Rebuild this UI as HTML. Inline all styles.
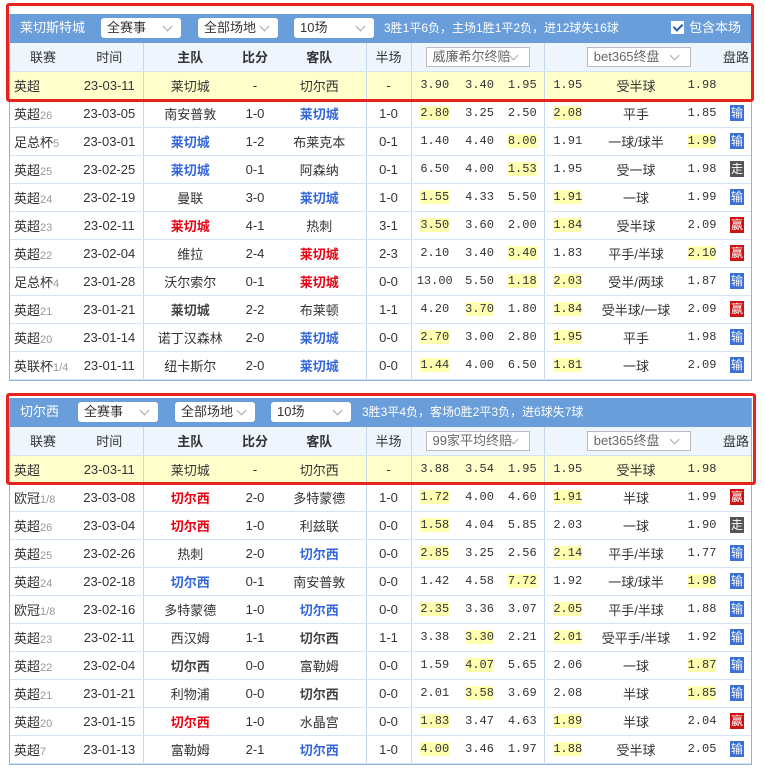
<!DOCTYPE html>
<html><head><meta charset="utf-8">
<style>
*{margin:0;padding:0;box-sizing:border-box}
body{width:765px;height:777px;background:#fff;font-family:"Liberation Sans","Noto Sans CJK SC",sans-serif;font-size:13px;color:#333;position:relative;overflow:hidden}
.wrap{position:absolute;left:9px;width:743px;border:1px solid #8fb3dd;border-top:none}
.bar{height:29px;background:#6a9edb;color:#fff;position:relative;font-size:13px}
.bar .t{position:absolute;top:0;line-height:28px}
.sel{position:absolute;top:4px;height:20px;line-height:20px;background:#fff;border-radius:3px;color:#333;font-size:13px;padding:0 0 0 6px}
.sel:after{content:"";position:absolute;right:10px;top:5px;width:6px;height:6px;border-right:1px solid #aaa;border-bottom:1px solid #aaa;transform:rotate(45deg)}
table{border-collapse:collapse;table-layout:fixed;width:741px}
td{height:28px;text-align:center;border-bottom:1px solid #d6e3f2;white-space:nowrap;overflow:hidden;padding:0}
tr.h td{background:#eef5fd;font-size:13px}
tr.y td{background:#ffffcc}
.bl{border-left:1px solid #c5d7ec}
.lg{text-align:left;padding-left:4px}
.lg i{font-style:normal;color:#999;font-size:11px}
.n{font-family:"Liberation Mono",monospace;font-size:12px}
.n span,.hl{background:#ffffb0}
.b{color:#3366dd;font-weight:bold}
.r{color:#e60012;font-weight:bold}
.d{color:#444;font-weight:bold}
.ic{display:inline-block;width:14px;height:16px;color:#fff;font-size:12px;line-height:16px;text-align:center;vertical-align:middle}
.L{background:#3a6fd8}.W{background:#cc1111}.D{background:#555}
.hs{display:inline-block;position:relative;height:20px;line-height:18px;border:1px solid #bbb;background:#fff;color:#666;text-align:left;padding:0 0 0 6px;vertical-align:middle}
.hs:after{content:"";position:absolute;right:12px;top:4px;width:6px;height:6px;border-right:1px solid #aaa;border-bottom:1px solid #aaa;transform:rotate(45deg)}
.red{position:absolute;border:3px solid #e8231e;border-radius:3px}
.cb{position:absolute;right:10px;top:0;line-height:28px}
.cb b{display:inline-block;width:13px;height:13px;background:#fff;vertical-align:-2px;margin-right:5px;position:relative}
.cb b:after{content:"";position:absolute;left:4px;top:1px;width:4px;height:7px;border-right:2px solid #2a5db0;border-bottom:2px solid #2a5db0;transform:rotate(45deg)}
</style></head><body>

<div class="wrap" style="top:14px">
<div class="bar">
<span class="t" style="left:10px">莱切斯特城</span>
<div class="sel" style="left:91px;width:80px">全赛事</div>
<div class="sel" style="left:188px;width:80px">全部场地</div>
<div class="sel" style="left:284px;width:80px">10场</div>
<span class="t" style="left:374px;font-size:12px">3胜1平6负，主场1胜1平2负，进12球失16球</span>
<span class="cb"><b></b>包含本场</span>
</div>
<table>
<colgroup><col style="width:66px"><col style="width:67px"><col style="width:94px"><col style="width:36px"><col style="width:93px"><col style="width:45px"><col style="width:47px"><col style="width:43px"><col style="width:43px"><col style="width:47px"><col style="width:90px"><col style="width:42px"><col style="width:28px"></colgroup>
<tr class="h"><td>联赛</td><td>时间</td><td class="bl"><b>主队</b></td><td><b>比分</b></td><td><b>客队</b></td><td class="bl">半场</td><td class="bl" colspan="3"><span class="hs" style="width:104px">威廉希尔终赔</span></td><td class="bl" colspan="3"><span class="hs" style="width:104px;margin-left:10px">bet365终盘</span></td><td style="text-align:right;padding-right:2px">盘路</td></tr>
<tr class="y"><td class="lg">英超</td><td>23-03-11</td><td class="bl">莱切城</td><td>-</td><td>切尔西</td><td class="bl">-</td><td class="bl n">3.90</td><td class="n">3.40</td><td class="n">1.95</td><td class="bl n">1.95</td><td>受半球</td><td class="n">1.98</td><td></td></tr>
<tr><td class="lg">英超<i>26</i></td><td>23-03-05</td><td class="bl">南安普敦</td><td>1-0</td><td class="b">莱切城</td><td class="bl">1-0</td><td class="bl n"><span>2.80</span></td><td class="n">3.25</td><td class="n">2.50</td><td class="bl n"><span>2.08</span></td><td>平手</td><td class="n">1.85</td><td><span class="ic L">输</span></td></tr>
<tr><td class="lg">足总杯<i>5</i></td><td>23-03-01</td><td class="bl b">莱切城</td><td>1-2</td><td>布莱克本</td><td class="bl">0-1</td><td class="bl n">1.40</td><td class="n">4.40</td><td class="n"><span>8.00</span></td><td class="bl n">1.91</td><td>一球/球半</td><td class="n"><span>1.99</span></td><td><span class="ic L">输</span></td></tr>
<tr><td class="lg">英超<i>25</i></td><td>23-02-25</td><td class="bl b">莱切城</td><td>0-1</td><td>阿森纳</td><td class="bl">0-1</td><td class="bl n">6.50</td><td class="n">4.00</td><td class="n"><span>1.53</span></td><td class="bl n">1.95</td><td>受一球</td><td class="n">1.98</td><td><span class="ic D">走</span></td></tr>
<tr><td class="lg">英超<i>24</i></td><td>23-02-19</td><td class="bl">曼联</td><td>3-0</td><td class="b">莱切城</td><td class="bl">1-0</td><td class="bl n"><span>1.55</span></td><td class="n">4.33</td><td class="n">5.50</td><td class="bl n"><span>1.91</span></td><td>一球</td><td class="n">1.99</td><td><span class="ic L">输</span></td></tr>
<tr><td class="lg">英超<i>23</i></td><td>23-02-11</td><td class="bl r">莱切城</td><td>4-1</td><td>热刺</td><td class="bl">3-1</td><td class="bl n"><span>3.50</span></td><td class="n">3.60</td><td class="n">2.00</td><td class="bl n"><span>1.84</span></td><td>受半球</td><td class="n">2.09</td><td><span class="ic W">赢</span></td></tr>
<tr><td class="lg">英超<i>22</i></td><td>23-02-04</td><td class="bl">维拉</td><td>2-4</td><td class="r">莱切城</td><td class="bl">2-3</td><td class="bl n">2.10</td><td class="n">3.40</td><td class="n"><span>3.40</span></td><td class="bl n">1.83</td><td>平手/半球</td><td class="n"><span>2.10</span></td><td><span class="ic W">赢</span></td></tr>
<tr><td class="lg">足总杯<i>4</i></td><td>23-01-28</td><td class="bl">沃尔索尔</td><td>0-1</td><td class="r">莱切城</td><td class="bl">0-0</td><td class="bl n">13.00</td><td class="n">5.50</td><td class="n"><span>1.18</span></td><td class="bl n"><span>2.03</span></td><td>受半/两球</td><td class="n">1.87</td><td><span class="ic L">输</span></td></tr>
<tr><td class="lg">英超<i>21</i></td><td>23-01-21</td><td class="bl d">莱切城</td><td>2-2</td><td>布莱顿</td><td class="bl">1-1</td><td class="bl n">4.20</td><td class="n"><span>3.70</span></td><td class="n">1.80</td><td class="bl n"><span>1.84</span></td><td>受半球/一球</td><td class="n">2.09</td><td><span class="ic W">赢</span></td></tr>
<tr><td class="lg">英超<i>20</i></td><td>23-01-14</td><td class="bl">诺丁汉森林</td><td>2-0</td><td class="b">莱切城</td><td class="bl">0-0</td><td class="bl n"><span>2.70</span></td><td class="n">3.00</td><td class="n">2.80</td><td class="bl n"><span>1.95</span></td><td>平手</td><td class="n">1.98</td><td><span class="ic L">输</span></td></tr>
<tr><td class="lg">英联杯<i>1/4</i></td><td>23-01-11</td><td class="bl">纽卡斯尔</td><td>2-0</td><td class="b">莱切城</td><td class="bl">0-0</td><td class="bl n"><span>1.44</span></td><td class="n">4.00</td><td class="n">6.50</td><td class="bl n"><span>1.81</span></td><td>一球</td><td class="n">2.09</td><td><span class="ic L">输</span></td></tr>
</table>
</div>
<div class="red" style="left:6px;top:3px;width:748px;height:99px"></div>

<div class="wrap" style="top:398px">
<div class="bar">
<span class="t" style="left:10px">切尔西</span>
<div class="sel" style="left:68px;width:80px">全赛事</div>
<div class="sel" style="left:165px;width:80px">全部场地</div>
<div class="sel" style="left:261px;width:80px">10场</div>
<span class="t" style="left:352px;font-size:12px">3胜3平4负，客场0胜2平3负，进6球失7球</span>
</div>
<table>
<colgroup><col style="width:66px"><col style="width:67px"><col style="width:94px"><col style="width:36px"><col style="width:93px"><col style="width:45px"><col style="width:47px"><col style="width:43px"><col style="width:43px"><col style="width:47px"><col style="width:90px"><col style="width:42px"><col style="width:28px"></colgroup>
<tr class="h"><td>联赛</td><td>时间</td><td class="bl"><b>主队</b></td><td><b>比分</b></td><td><b>客队</b></td><td class="bl">半场</td><td class="bl" colspan="3"><span class="hs" style="width:104px">99家平均终赔</span></td><td class="bl" colspan="3"><span class="hs" style="width:104px;margin-left:10px">bet365终盘</span></td><td style="text-align:right;padding-right:2px">盘路</td></tr>
<tr class="y"><td class="lg">英超</td><td>23-03-11</td><td class="bl">莱切城</td><td>-</td><td>切尔西</td><td class="bl">-</td><td class="bl n">3.88</td><td class="n">3.54</td><td class="n">1.95</td><td class="bl n">1.95</td><td>受半球</td><td class="n">1.98</td><td></td></tr>
<tr><td class="lg">欧冠<i>1/8</i></td><td>23-03-08</td><td class="bl r">切尔西</td><td>2-0</td><td>多特蒙德</td><td class="bl">1-0</td><td class="bl n"><span>1.72</span></td><td class="n">4.00</td><td class="n">4.60</td><td class="bl n"><span>1.91</span></td><td>半球</td><td class="n">1.99</td><td><span class="ic W">赢</span></td></tr>
<tr><td class="lg">英超<i>26</i></td><td>23-03-04</td><td class="bl r">切尔西</td><td>1-0</td><td>利兹联</td><td class="bl">0-0</td><td class="bl n"><span>1.58</span></td><td class="n">4.04</td><td class="n">5.85</td><td class="bl n">2.03</td><td>一球</td><td class="n">1.90</td><td><span class="ic D">走</span></td></tr>
<tr><td class="lg">英超<i>25</i></td><td>23-02-26</td><td class="bl">热刺</td><td>2-0</td><td class="b">切尔西</td><td class="bl">0-0</td><td class="bl n"><span>2.85</span></td><td class="n">3.25</td><td class="n">2.56</td><td class="bl n"><span>2.14</span></td><td>平手/半球</td><td class="n">1.77</td><td><span class="ic L">输</span></td></tr>
<tr><td class="lg">英超<i>24</i></td><td>23-02-18</td><td class="bl b">切尔西</td><td>0-1</td><td>南安普敦</td><td class="bl">0-0</td><td class="bl n">1.42</td><td class="n">4.58</td><td class="n"><span>7.72</span></td><td class="bl n">1.92</td><td>一球/球半</td><td class="n"><span>1.98</span></td><td><span class="ic L">输</span></td></tr>
<tr><td class="lg">欧冠<i>1/8</i></td><td>23-02-16</td><td class="bl">多特蒙德</td><td>1-0</td><td class="b">切尔西</td><td class="bl">0-0</td><td class="bl n"><span>2.35</span></td><td class="n">3.36</td><td class="n">3.07</td><td class="bl n"><span>2.05</span></td><td>平手/半球</td><td class="n">1.88</td><td><span class="ic L">输</span></td></tr>
<tr><td class="lg">英超<i>23</i></td><td>23-02-11</td><td class="bl">西汉姆</td><td>1-1</td><td class="d">切尔西</td><td class="bl">1-1</td><td class="bl n">3.38</td><td class="n"><span>3.30</span></td><td class="n">2.21</td><td class="bl n"><span>2.01</span></td><td>受平手/半球</td><td class="n">1.92</td><td><span class="ic L">输</span></td></tr>
<tr><td class="lg">英超<i>22</i></td><td>23-02-04</td><td class="bl d">切尔西</td><td>0-0</td><td>富勒姆</td><td class="bl">0-0</td><td class="bl n">1.59</td><td class="n"><span>4.07</span></td><td class="n">5.65</td><td class="bl n">2.06</td><td>一球</td><td class="n"><span>1.87</span></td><td><span class="ic L">输</span></td></tr>
<tr><td class="lg">英超<i>21</i></td><td>23-01-21</td><td class="bl">利物浦</td><td>0-0</td><td class="d">切尔西</td><td class="bl">0-0</td><td class="bl n">2.01</td><td class="n"><span>3.58</span></td><td class="n">3.69</td><td class="bl n">2.08</td><td>半球</td><td class="n"><span>1.85</span></td><td><span class="ic L">输</span></td></tr>
<tr><td class="lg">英超<i>20</i></td><td>23-01-15</td><td class="bl r">切尔西</td><td>1-0</td><td>水晶宫</td><td class="bl">0-0</td><td class="bl n"><span>1.83</span></td><td class="n">3.47</td><td class="n">4.63</td><td class="bl n"><span>1.89</span></td><td>半球</td><td class="n">2.04</td><td><span class="ic W">赢</span></td></tr>
<tr><td class="lg">英超<i>7</i></td><td>23-01-13</td><td class="bl">富勒姆</td><td>2-1</td><td class="b">切尔西</td><td class="bl">1-0</td><td class="bl n"><span>4.00</span></td><td class="n">3.46</td><td class="n">1.97</td><td class="bl n"><span>1.88</span></td><td>受半球</td><td class="n">2.05</td><td><span class="ic L">输</span></td></tr>
</table>
</div>
<div class="red" style="left:6px;top:393px;width:750px;height:92px"></div>
</body></html>
